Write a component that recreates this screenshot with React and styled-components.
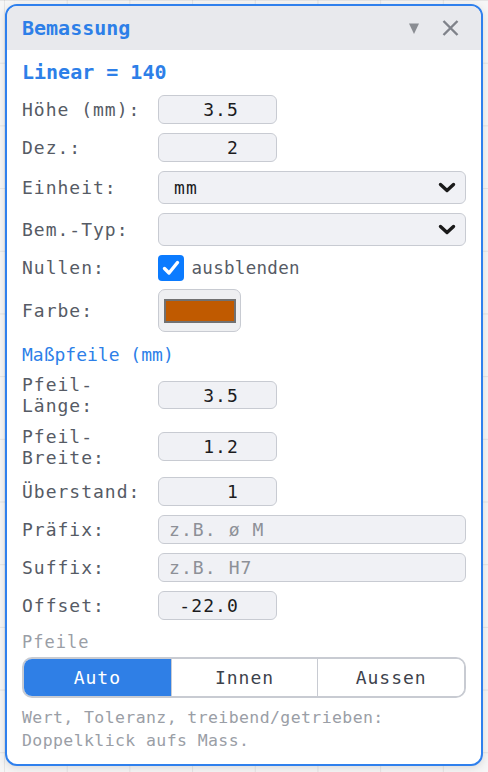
import React from "react";
import styled, { createGlobalStyle } from "styled-components";

const Global = createGlobalStyle`
  html, body { margin: 0; padding: 0; }
  body {
    min-height: 100vh;
    background-color: #f6f6f6;
    background-image:
      linear-gradient(to right, rgba(0,0,0,0.07) 1px, transparent 1px),
      linear-gradient(to bottom, rgba(0,0,0,0.07) 1px, transparent 1px);
    background-size: 62.7px 62.7px;
    background-position: 4px 0;
    font-family: "DejaVu Sans Mono", monospace;
  }
  * { box-sizing: border-box; }
`;

const Panel = styled.div`
  margin: 4px 5px 0;
  border: 2px solid #2f80ed;
  border-radius: 12px;
  background: #ffffff;
  overflow: hidden;
  box-shadow: 0 2px 8px rgba(0, 0, 0, 0.12);
`;

const Header = styled.div`
  height: 44px;
  background: #e8e9ed;
  display: flex;
  align-items: center;
  padding: 0 22px 0 15px;
`;

const Title = styled.div`
  flex: 1;
  font-size: 20px;
  font-weight: bold;
  color: #2d7fe8;
`;

const HeaderIcons = styled.div`
  display: flex;
  align-items: center;
  gap: 23px;
`;

const IconButton = styled.span`
  display: flex;
  align-items: center;
  justify-content: center;
  color: #85888f;
`;

const Body = styled.div`
  padding: 9.7px 15px 11.5px;
`;

const Heading = styled.div`
  font-size: 20px;
  font-weight: bold;
  color: #2d7fe8;
  margin-bottom: 11.7px;
`;

const Form = styled.div`
  display: grid;
  grid-template-columns: 124px 1fr;
  column-gap: 12px;
  row-gap: 9.4px;
  align-items: center;
`;

const Label = styled.div`
  font-size: 18px;
  letter-spacing: 1px;
  color: #565b65;
  white-space: nowrap;
`;

const TextInput = styled.input`
  width: ${(p) => (p.$wide ? "100%" : "119px")};
  height: 28.6px;
  border: 1.5px solid #c8cbd2;
  border-radius: 6px;
  background: #f0f1f5;
  font-family: "DejaVu Sans Mono", monospace;
  font-size: 18px;
  letter-spacing: 1.1px;
  color: #1c1c1e;
  text-align: ${(p) => (p.$wide ? "left" : "right")};
  padding: 0 ${(p) => (p.$wide ? "10px" : "37px")} 0 10px;
  outline: none;
  &::placeholder {
    color: #8d9097;
  }
`;

const Select = styled.div`
  height: 32.6px;
  border: 1.5px solid #c8cbd2;
  border-radius: 6px;
  background: #f0f1f5;
  display: flex;
  align-items: center;
  padding: 0 9px 0 15px;
  font-size: 18px;
  letter-spacing: 1.1px;
  color: #1c1c1e;
`;

const SelectValue = styled.span`
  flex: 1;
`;

const CheckRow = styled.div`
  display: flex;
  align-items: center;
  gap: 7.5px;
  height: 24.6px;
`;

const CheckBox = styled.span`
  width: 26px;
  height: 26px;
  border-radius: 4px;
  background: #0b7bff;
  display: flex;
  align-items: center;
  justify-content: center;
`;

const CheckText = styled.span`
  font-size: 17.5px;
  letter-spacing: 0.3px;
  color: #565b65;
`;

const ColorButton = styled.div`
  width: 83px;
  height: 42.6px;
  border: 1.5px solid #c8cbd2;
  border-radius: 7px;
  background: #eeeff1;
  display: flex;
  align-items: center;
  justify-content: center;
`;

const Swatch = styled.div`
  width: 72px;
  height: 24px;
  border: 2px solid #717171;
  background: ${(p) => p.$color};
`;

const Section = styled.div`
  grid-column: 1 / -1;
  font-size: 18px;
  color: #2d7fe8;
  margin-top: 2.5px;
`;

const ArrowGroup = styled.div`
  grid-column: 1 / -1;
  display: flex;
  flex-direction: column;
  gap: 4.3px;
  margin-top: 3.4px;
`;

const SubLabel = styled.div`
  font-size: 17px;
  letter-spacing: 1px;
  color: #9a9ea6;
`;

const Segmented = styled.div`
  display: grid;
  grid-template-columns: 1fr 1fr 1fr;
  height: 41px;
  border: 2px solid #c8cbd2;
  border-radius: 10px;
  overflow: hidden;
`;

const Segment = styled.div`
  display: flex;
  align-items: center;
  justify-content: center;
  font-size: 18px;
  letter-spacing: 1px;
  background: ${(p) => (p.$active ? "#2f7fe6" : "#ffffff")};
  color: ${(p) => (p.$active ? "#ffffff" : "#3d424c")};
  & + & {
    border-left: 1.5px solid #c8cbd2;
  }
`;

const Footer = styled.div`
  margin-top: 8px;
  font-size: 16.5px;
  letter-spacing: 0.4px;
  line-height: 23.3px;
  color: #9a9ea6;
`;

const Chevron = () => (
  <svg width="18" height="11" viewBox="0 0 18 11">
    <polyline
      points="2.5,2.5 9,8.5 15.5,2.5"
      fill="none"
      stroke="#1a1a1a"
      strokeWidth="3.4"
      strokeLinecap="round"
      strokeLinejoin="round"
    />
  </svg>
);

export default function App() {
  return (
    <>
      <Global />
      <Panel>
        <Header>
          <Title>Bemassung</Title>
          <HeaderIcons>
            <IconButton>
              <svg width="10" height="11" viewBox="0 0 10 11">
                <polygon points="0,0.5 10,0.5 5,11" fill="#8a8d93" />
              </svg>
            </IconButton>
            <IconButton>
              <svg width="17" height="16" viewBox="0 0 17 16">
                <path
                  d="M1.5 1 L15.5 15 M15.5 1 L1.5 15"
                  stroke="#7f828a"
                  strokeWidth="2.4"
                  fill="none"
                />
              </svg>
            </IconButton>
          </HeaderIcons>
        </Header>
        <Body>
          <Heading>Linear = 140</Heading>
          <Form>
            <Label>Höhe (mm):</Label>
            <TextInput defaultValue="3.5" />
            <Label>Dez.:</Label>
            <TextInput defaultValue="2" />
            <Label>Einheit:</Label>
            <Select>
              <SelectValue>mm</SelectValue>
              <Chevron />
            </Select>
            <Label>Bem.-Typ:</Label>
            <Select>
              <SelectValue></SelectValue>
              <Chevron />
            </Select>
            <Label>Nullen:</Label>
            <CheckRow>
              <CheckBox>
                <svg width="20" height="20" viewBox="0 0 20 20">
                  <path
                    d="M3.5 10.5 L8 15 L16.5 4.5"
                    stroke="#ffffff"
                    strokeWidth="3.4"
                    fill="none"
                    strokeLinecap="round"
                    strokeLinejoin="round"
                  />
                </svg>
              </CheckBox>
              <CheckText>ausblenden</CheckText>
            </CheckRow>
            <Label>Farbe:</Label>
            <ColorButton>
              <Swatch $color="#c05a00" />
            </ColorButton>
            <Section>Maßpfeile (mm)</Section>
            <Label>
              Pfeil-
              <br />
              Länge:
            </Label>
            <TextInput defaultValue="3.5" />
            <Label>
              Pfeil-
              <br />
              Breite:
            </Label>
            <TextInput defaultValue="1.2" />
            <Label>Überstand:</Label>
            <TextInput defaultValue="1" />
            <Label>Präfix:</Label>
            <TextInput $wide placeholder="z.B. ø M" />
            <Label>Suffix:</Label>
            <TextInput $wide placeholder="z.B. H7" />
            <Label>Offset:</Label>
            <TextInput defaultValue="-22.0" />
            <ArrowGroup>
              <SubLabel>Pfeile</SubLabel>
              <Segmented>
                <Segment $active>Auto</Segment>
                <Segment>Innen</Segment>
                <Segment>Aussen</Segment>
              </Segmented>
            </ArrowGroup>
          </Form>
          <Footer>
            Wert, Toleranz, treibend/getrieben:
            <br />
            Doppelklick aufs Mass.
          </Footer>
        </Body>
      </Panel>
    </>
  );
}
